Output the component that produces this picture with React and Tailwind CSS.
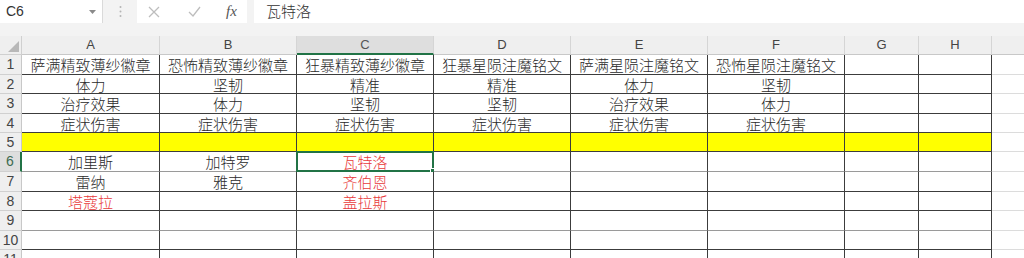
import React from "react";

const cols = [
  { key: "A", w: "w-[138px]" },
  { key: "B", w: "w-[137px]" },
  { key: "C", w: "w-[137px]" },
  { key: "D", w: "w-[137px]" },
  { key: "E", w: "w-[137px]" },
  { key: "F", w: "w-[137px]" },
  { key: "G", w: "w-[74px]" },
  { key: "H", w: "w-[73px]" },
];

const heights = ["h-[20px]", "h-[19px]", "h-[20px]", "h-[19px]", "h-[19px]", "h-[20px]", "h-[20px]", "h-[19px]", "h-[20px]", "h-[19px]", "h-[20px]"];

const red = "text-[#e8393a]";

const rows = [
  ["萨满精致薄纱徽章", "恐怖精致薄纱徽章", "狂暴精致薄纱徽章", "狂暴星陨注魔铭文", "萨满星陨注魔铭文", "恐怖星陨注魔铭文"],
  ["体力", "坚韧", "精准", "精准", "体力", "坚韧"],
  ["治疗效果", "体力", "坚韧", "坚韧", "治疗效果", "体力"],
  ["症状伤害", "症状伤害", "症状伤害", "症状伤害", "症状伤害", "症状伤害"],
  [],
  ["加里斯", "加特罗", { t: "瓦特洛", red: true }],
  ["雷纳", "雅克", { t: "齐伯恩", red: true }],
  [{ t: "塔蔻拉", red: true }, "", { t: "盖拉斯", red: true }],
  [],
  [],
  [],
];

const FormulaBar = () => (
  <div className="flex h-[23px] bg-[#f3f3f3]">
    <div className="w-[103px] bg-white border-r border-[#dadada] flex items-center justify-between pl-[6px] pr-[6px]">
      <span className="text-[14px] text-[#333] font-['Liberation_Sans',sans-serif]">C6</span>
      <svg width="7" height="4" viewBox="0 0 7 4"><path d="M0 0h7L3.5 4z" fill="#8a8a8a" /></svg>
    </div>
    <div className="w-[34px] flex items-center justify-center">
      <svg width="3" height="13" viewBox="0 0 3 13">
        <circle cx="1.5" cy="2" r="1" fill="#b5b5b5" />
        <circle cx="1.5" cy="6.5" r="1" fill="#b5b5b5" />
        <circle cx="1.5" cy="11" r="1" fill="#b5b5b5" />
      </svg>
    </div>
    <div className="w-[110px] bg-white flex items-center">
      <svg className="ml-[11px]" width="12" height="12" viewBox="0 0 12 12">
        <path d="M1 1l10 10M11 1L1 11" stroke="#bdbdbd" strokeWidth="1.3" />
      </svg>
      <svg className="ml-[28px]" width="13" height="11" viewBox="0 0 13 11">
        <path d="M1 6l4 4 7-9" stroke="#bdbdbd" strokeWidth="1.3" fill="none" />
      </svg>
      <span className="ml-[25px] text-[15px] italic text-[#555] font-['Liberation_Serif',serif]">fx</span>
    </div>
    <div className="w-[7px]" />
    <div className="flex-1 bg-white flex items-center pl-[12px] text-[15px] font-light text-[#333]">瓦特洛</div>
  </div>
);

const Cell = ({ col, ri, value }) => {
  const text = typeof value === "object" && value ? value.t : value;
  const isRed = typeof value === "object" && value ? value.red : false;
  const yellow = ri === 4;
  const grayLine = ri === 5 || ri === 8;
  const selected = ri === 5 && col.key === "C";
  return (
    <div
      className={`relative ${col.w} shrink-0 border-r border-b border-r-[#3c3c3c] ${grayLine ? "border-b-[#9a9a9a]" : "border-b-[#3c3c3c]"} ${yellow ? "bg-[#ffff00]" : "bg-white"} flex items-center justify-center text-[15px] font-light leading-none ${isRed ? red : "text-[#2a2a2a]"}`}
    >
      {text}
      {selected && (
        <div className="absolute -left-[1px] -top-[1px] -right-[1px] -bottom-[1px] border-2 border-[#217346]">
          <div className="absolute -right-[4px] -bottom-[4px] w-[6px] h-[6px] bg-[#217346] border border-white" />
        </div>
      )}
    </div>
  );
};

const Sheet = () => (
  <div className="flex flex-col">
    <div className="flex h-[19px] bg-[#efefef] font-['Liberation_Sans',sans-serif] text-[13px] text-[#444]">
      <div className="w-[22px] shrink-0 border-r border-b border-[#d0d0d0] relative">
        <svg className="absolute right-[2px] bottom-[2px]" width="11" height="11" viewBox="0 0 11 11">
          <path d="M11 0V11H0z" fill="#b8b8b8" />
        </svg>
      </div>
      {cols.map((c) => (
        <div
          key={c.key}
          className={`${c.w} shrink-0 flex items-center justify-center border-r border-[#d5d5d5] ${c.key === "C" ? "bg-[#dedede] border-b-2 border-b-[#217346] text-[#555]" : "border-b border-b-[#c8c8c8]"}`}
        >
          {c.key}
        </div>
      ))}
      <div className="flex-1 border-b border-[#c8c8c8]" />
    </div>
    {rows.map((r, ri) => (
      <div key={ri} className={`flex ${heights[ri]}`}>
        <div
          className={`w-[22px] shrink-0 flex items-center justify-center text-[14px] font-['Liberation_Sans',sans-serif] border-b border-b-[#d0d0d0] ${ri === 5 ? "bg-[#dedede] border-r-2 border-r-[#217346] text-[#3d6b50]" : "bg-[#efefef] border-r border-r-[#c8c8c8] text-[#444]"}`}
        >
          {ri + 1}
        </div>
        {cols.map((c, ci) => (
          <Cell key={c.key} col={c} ri={ri} value={r[ci]} />
        ))}
        <div className="flex-1 bg-white border-b border-[#dcdcdc] flex">
          <div className="w-[33px] h-full border-r border-[#dcdcdc]" />
        </div>
      </div>
    ))}
  </div>
);

export default function App() {
  return (
    <div className="w-[1024px] h-[258px] overflow-hidden bg-[#f3f3f3] font-['Noto_Sans_CJK_SC',sans-serif]">
      <FormulaBar />
      <div className="h-[13px] bg-[#f3f3f3]" />
      <Sheet />
    </div>
  );
}
